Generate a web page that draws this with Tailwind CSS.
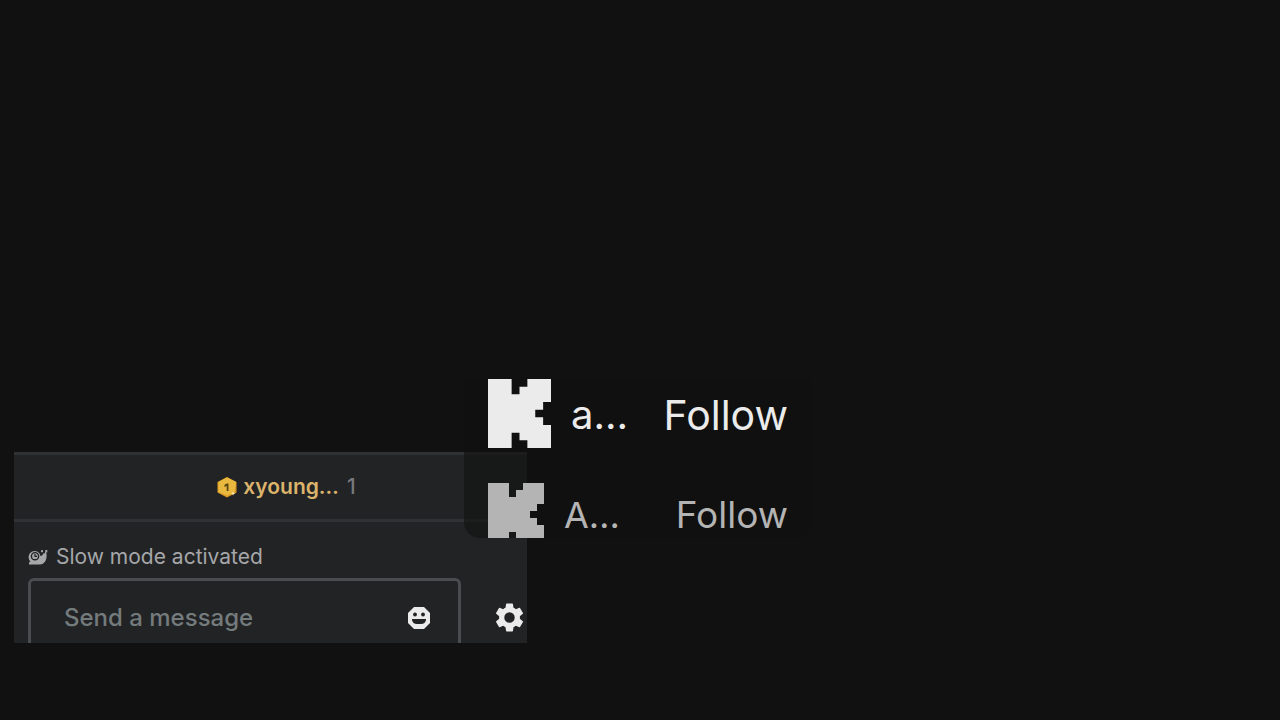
<!DOCTYPE html>
<html lang="en">
<head>
<meta charset="utf-8">
<meta name="viewport" content="width=device-width, initial-scale=1">
<title>Chat</title>
<script src="https://cdn.jsdelivr.net/npm/@tailwindcss/browser@4"></script>
</head>
<body class="min-h-screen overflow-hidden bg-[#111111] font-['Inter',sans-serif]">
<main class="px-3.5 pt-[452px]">
  <div class="relative w-full max-w-[513px]">
    <section class="h-[191px] overflow-hidden bg-[#222325]" aria-label="Chat">
      <header class="flex h-[70px] items-center justify-center gap-2 border-y-3 border-[#303134] pl-8">
        <div class="flex items-center gap-1.5">
          <svg class="h-[21px] w-5" viewBox="0 0 20 21" aria-hidden="true">
            <path d="M10 0 19.500 5v10.500L10 20.500.5 15.500V5z" fill="#dd9b25"/>
            <path d="M10 .5 19 5 17.500 15 10 18.500 1.500 15V5z" fill="#e9b93f"/>
            <path d="m16 14.500.8 1.500 1.700.5-1.700.6-.8 1.400-.6-1.400-1.500-.6 1.500-.5z" fill="#fff0b5"/>
            <path d="M7.500 7.800 9.800 6.500h1.700V14H9.700V9l-2.200.9z" fill="#5d4616"/>
          </svg>
          <span class="text-[21px] leading-7 font-semibold text-[#dcb36b]">xyoung…</span>
        </div>
        <span class="text-[21px] leading-7 font-medium text-[#77797c]">1</span>
      </header>
      <div class="flex items-center gap-2 px-3.5 pt-[21px] text-[#a5a7a9]">
        <svg class="h-4 w-5" viewBox="0 0 20 16" fill="currentColor" aria-hidden="true">
          <path d="M1 15.500v-1.600c0-.8.800-1.400 1.500-1.500A6 6 0 1 1 12.500 7c1.500 0 2.500-1 2.500-2.500h1.500l.6-1.500h1l.4 2c.7 5-1.500 10.500-6.500 10.500z"/>
          <rect x="13" y="1.200" width="2" height="2"/><rect x="17.300" y="1" width="2" height="2.400"/>
          <circle cx="7" cy="7.200" r="3.600" fill="none" stroke="#222325" stroke-width="1.400"/>
          <path d="M7 5v2.400h2" fill="none" stroke="#222325" stroke-width="1.300"/>
        </svg>
        <p class="text-[21px] leading-7">Slow mode activated</p>
      </div>
      <form class="flex items-start justify-between pt-[7px] pr-[3px] pl-3.5">
        <div class="flex h-[79px] w-[433px] items-center rounded-md border-3 border-[#4b4c50] pr-7 pl-[33px]">
          <input type="text" aria-label="Send a message" placeholder="Send a message" class="min-w-0 flex-1 bg-transparent text-[24px] leading-8 font-medium text-white outline-none placeholder:text-[#747b7c]">
          <button type="button" aria-label="Emotes">
            <svg class="h-[22px] w-[22px]" viewBox="0 0 22 22" aria-hidden="true">
              <path d="M6 0h10l6 6v10l-6 6H6l-6-6V6z" fill="#ebebeb"/>
              <circle cx="7" cy="7.500" r="1.900" fill="#222325"/><circle cx="15" cy="7.500" r="1.900" fill="#222325"/>
              <path d="M4 12h14v1a5 5 0 0 1-5 4H9a5 5 0 0 1-5-4z" fill="#222325"/>
            </svg>
          </button>
        </div>
        <button type="button" aria-label="Chat settings" class="flex h-[79px] items-center">
          <svg class="h-[29px] w-[29px]" viewBox="2 2 20 20" fill="#ebebeb" aria-hidden="true"><path d="M19.140 12.940c.04-.3.060-.61.060-.94s-.02-.64-.07-.94l2.030-1.580a.49.490 0 0 0 .12-.61l-1.920-3.320a.49.490 0 0 0-.59-.22l-2.390.96a7 7 0 0 0-1.620-.94L14.400 2.810a.48.480 0 0 0-.48-.41h-3.840a.47.470 0 0 0-.47.410l-.36 2.540a7.300 7.300 0 0 0-1.620.94l-2.390-.96a.47.470 0 0 0-.59.220L2.740 8.870a.47.470 0 0 0 .12.610l2.030 1.580a7 7 0 0 0 0 1.880l-2.030 1.580a.49.490 0 0 0-.12.610l1.920 3.320c.12.220.37.290.59.220l2.390-.96c.5.380 1.030.7 1.620.94l.36 2.540c.05.240.24.410.48.410h3.840c.24 0 .44-.17.470-.41l.36-2.540a7 7 0 0 0 1.620-.94l2.390.96c.22.080.47 0 .59-.22l1.920-3.320a.47.470 0 0 0-.12-.61zM12 15.600a3.600 3.600 0 1 1 0-7.200 3.600 3.600 0 0 1 0 7.200z"/></svg>
        </button>
      </form>
    </section>
    <aside class="absolute bottom-[105px] left-[450px] w-[348px] rounded-b-2xl bg-[#111111]/60 px-6" aria-label="Suggested channels">
      <ul>
        <li class="flex items-start text-[40px] leading-18 text-[#ebebeb]">
          <svg class="h-[69px] w-[63px] shrink-0" viewBox="0 0 8 9" preserveAspectRatio="none" fill="currentColor" role="img" aria-label="Kick"><path d="M0 0H3V2H4V1H5V0H8V3H7V4H6V5H7V6H8V9H5V8H4V7H3V9H0Z"/></svg>
          <span class="pl-5">a…</span>
          <button type="button" class="ml-auto text-[41px]">Follow</button>
        </li>
        <li class="mt-8 flex h-[55px] items-start overflow-hidden text-[36px] leading-16 text-[#b4b4b4]">
          <svg class="h-[63px] w-14 shrink-0" viewBox="0 0 8 9" preserveAspectRatio="none" fill="currentColor" role="img" aria-label="Kick"><path d="M0 0H3V2H4V1H5V0H8V3H7V4H6V5H7V6H8V9H5V8H4V7H3V9H0Z"/></svg>
          <span class="pl-5">A…</span>
          <button type="button" class="ml-auto text-[37px]">Follow</button>
        </li>
      </ul>
    </aside>
  </div>
</main>
</body>
</html>
